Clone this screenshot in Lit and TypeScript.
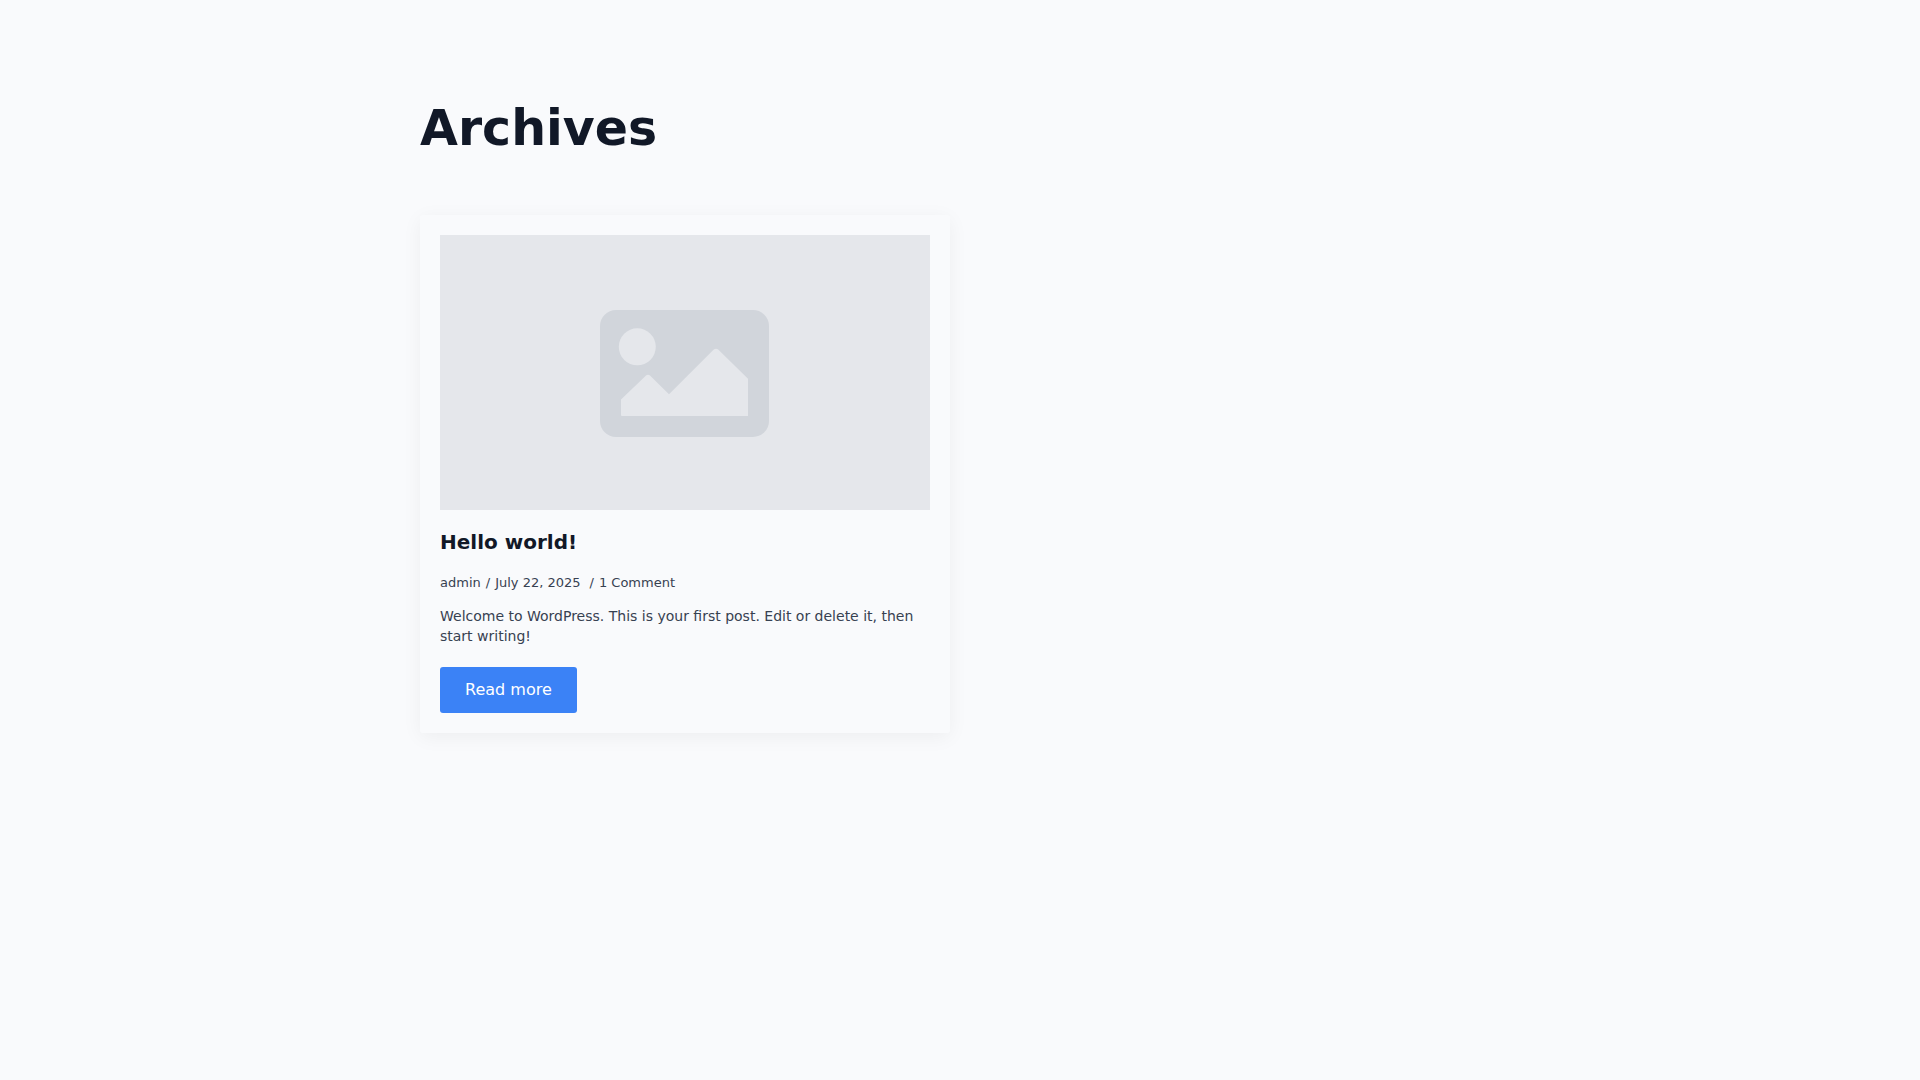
import { LitElement, html, css } from "lit";
import { customElement } from "lit/decorators.js";

interface Post {
  title: string;
  author: string;
  date: string;
  comments: string;
  excerpt: string;
}

const posts: Post[] = [
  {
    title: "Hello world!",
    author: "admin",
    date: "July 22, 2025",
    comments: "1 Comment",
    excerpt:
      "Welcome to WordPress. This is your first post. Edit or delete it, then start writing!",
  },
];

@customElement("app-root")
export class AppRoot extends LitElement {
  static styles = css`
    :host {
      display: block;
      box-sizing: border-box;
      min-height: 100vh;
      padding: 96px 40px;
      background: #f9fafc;
      color: #374151;
      font-family: "DejaVu Sans", sans-serif;
    }
    .container {
      max-width: 1080px;
      margin: 0 auto;
    }
    .heading {
      margin: 0 0 53px;
      color: #111827;
      font-size: 49px;
      line-height: 66px;
      font-weight: 700;
    }
    .posts {
      display: grid;
      grid-template-columns: repeat(2, minmax(0, 1fr));
      gap: 20px;
    }
    .card {
      padding: 20px;
      border-radius: 3px;
      box-shadow: 0 4px 20px rgba(0, 0, 0, 0.05);
    }
    .thumb,
    .picture {
      display: block;
    }
    .picture {
      width: 100%;
    }
    .title {
      margin: 20px 0 0;
      font-size: 20px;
      line-height: 24px;
    }
    .title a {
      color: #111827;
      text-decoration: none;
    }
    .meta {
      display: flex;
      gap: 5px;
      margin-top: 20px;
      font-size: 13px;
      line-height: 18px;
    }
    .meta time {
      padding-right: 4px;
    }
    .excerpt {
      margin: 14px 0 21px;
      font-size: 14px;
      line-height: 20px;
    }
    .more {
      display: inline-block;
      vertical-align: top;
      padding: 11px 25px;
      border-radius: 3px;
      background: #3b82f6;
      color: #fff;
      font-size: 16px;
      line-height: 24px;
      text-decoration: none;
    }
  `;

  private renderPost(post: Post) {
    return html`
      <article class="card">
        <a class="thumb" href="#post" aria-label=${post.title}>
          <svg class="picture" viewBox="0 0 490 275" aria-hidden="true">
            <rect width="490" height="275" fill="#e5e7eb" />
            <rect x="160" y="75" width="169" height="127" rx="16" fill="#d1d5db" />
            <circle cx="197.3" cy="111.8" r="18.5" fill="#e5e7eb" />
            <path
              d="M182 181Q181 181 181 180V164.500L206 140.500Q208 139 210 140.500L229 159.300L273.500 114.800Q276 112.500 278.500 114.800L308 143.700V181Z"
              fill="#e5e7eb"
            />
          </svg>
        </a>
        <h2 class="title"><a href="#post">${post.title}</a></h2>
        <div class="meta">
          <span>${post.author}</span>
          <span>/</span>
          <time datetime="2025-07-22">${post.date}</time>
          <span>/</span>
          <span>${post.comments}</span>
        </div>
        <p class="excerpt">${post.excerpt}</p>
        <a class="more" href="#post">Read more</a>
      </article>
    `;
  }

  render() {
    return html`
      <main class="container">
        <h1 class="heading">Archives</h1>
        <section class="posts">${posts.map((p) => this.renderPost(p))}</section>
      </main>
    `;
  }
}
